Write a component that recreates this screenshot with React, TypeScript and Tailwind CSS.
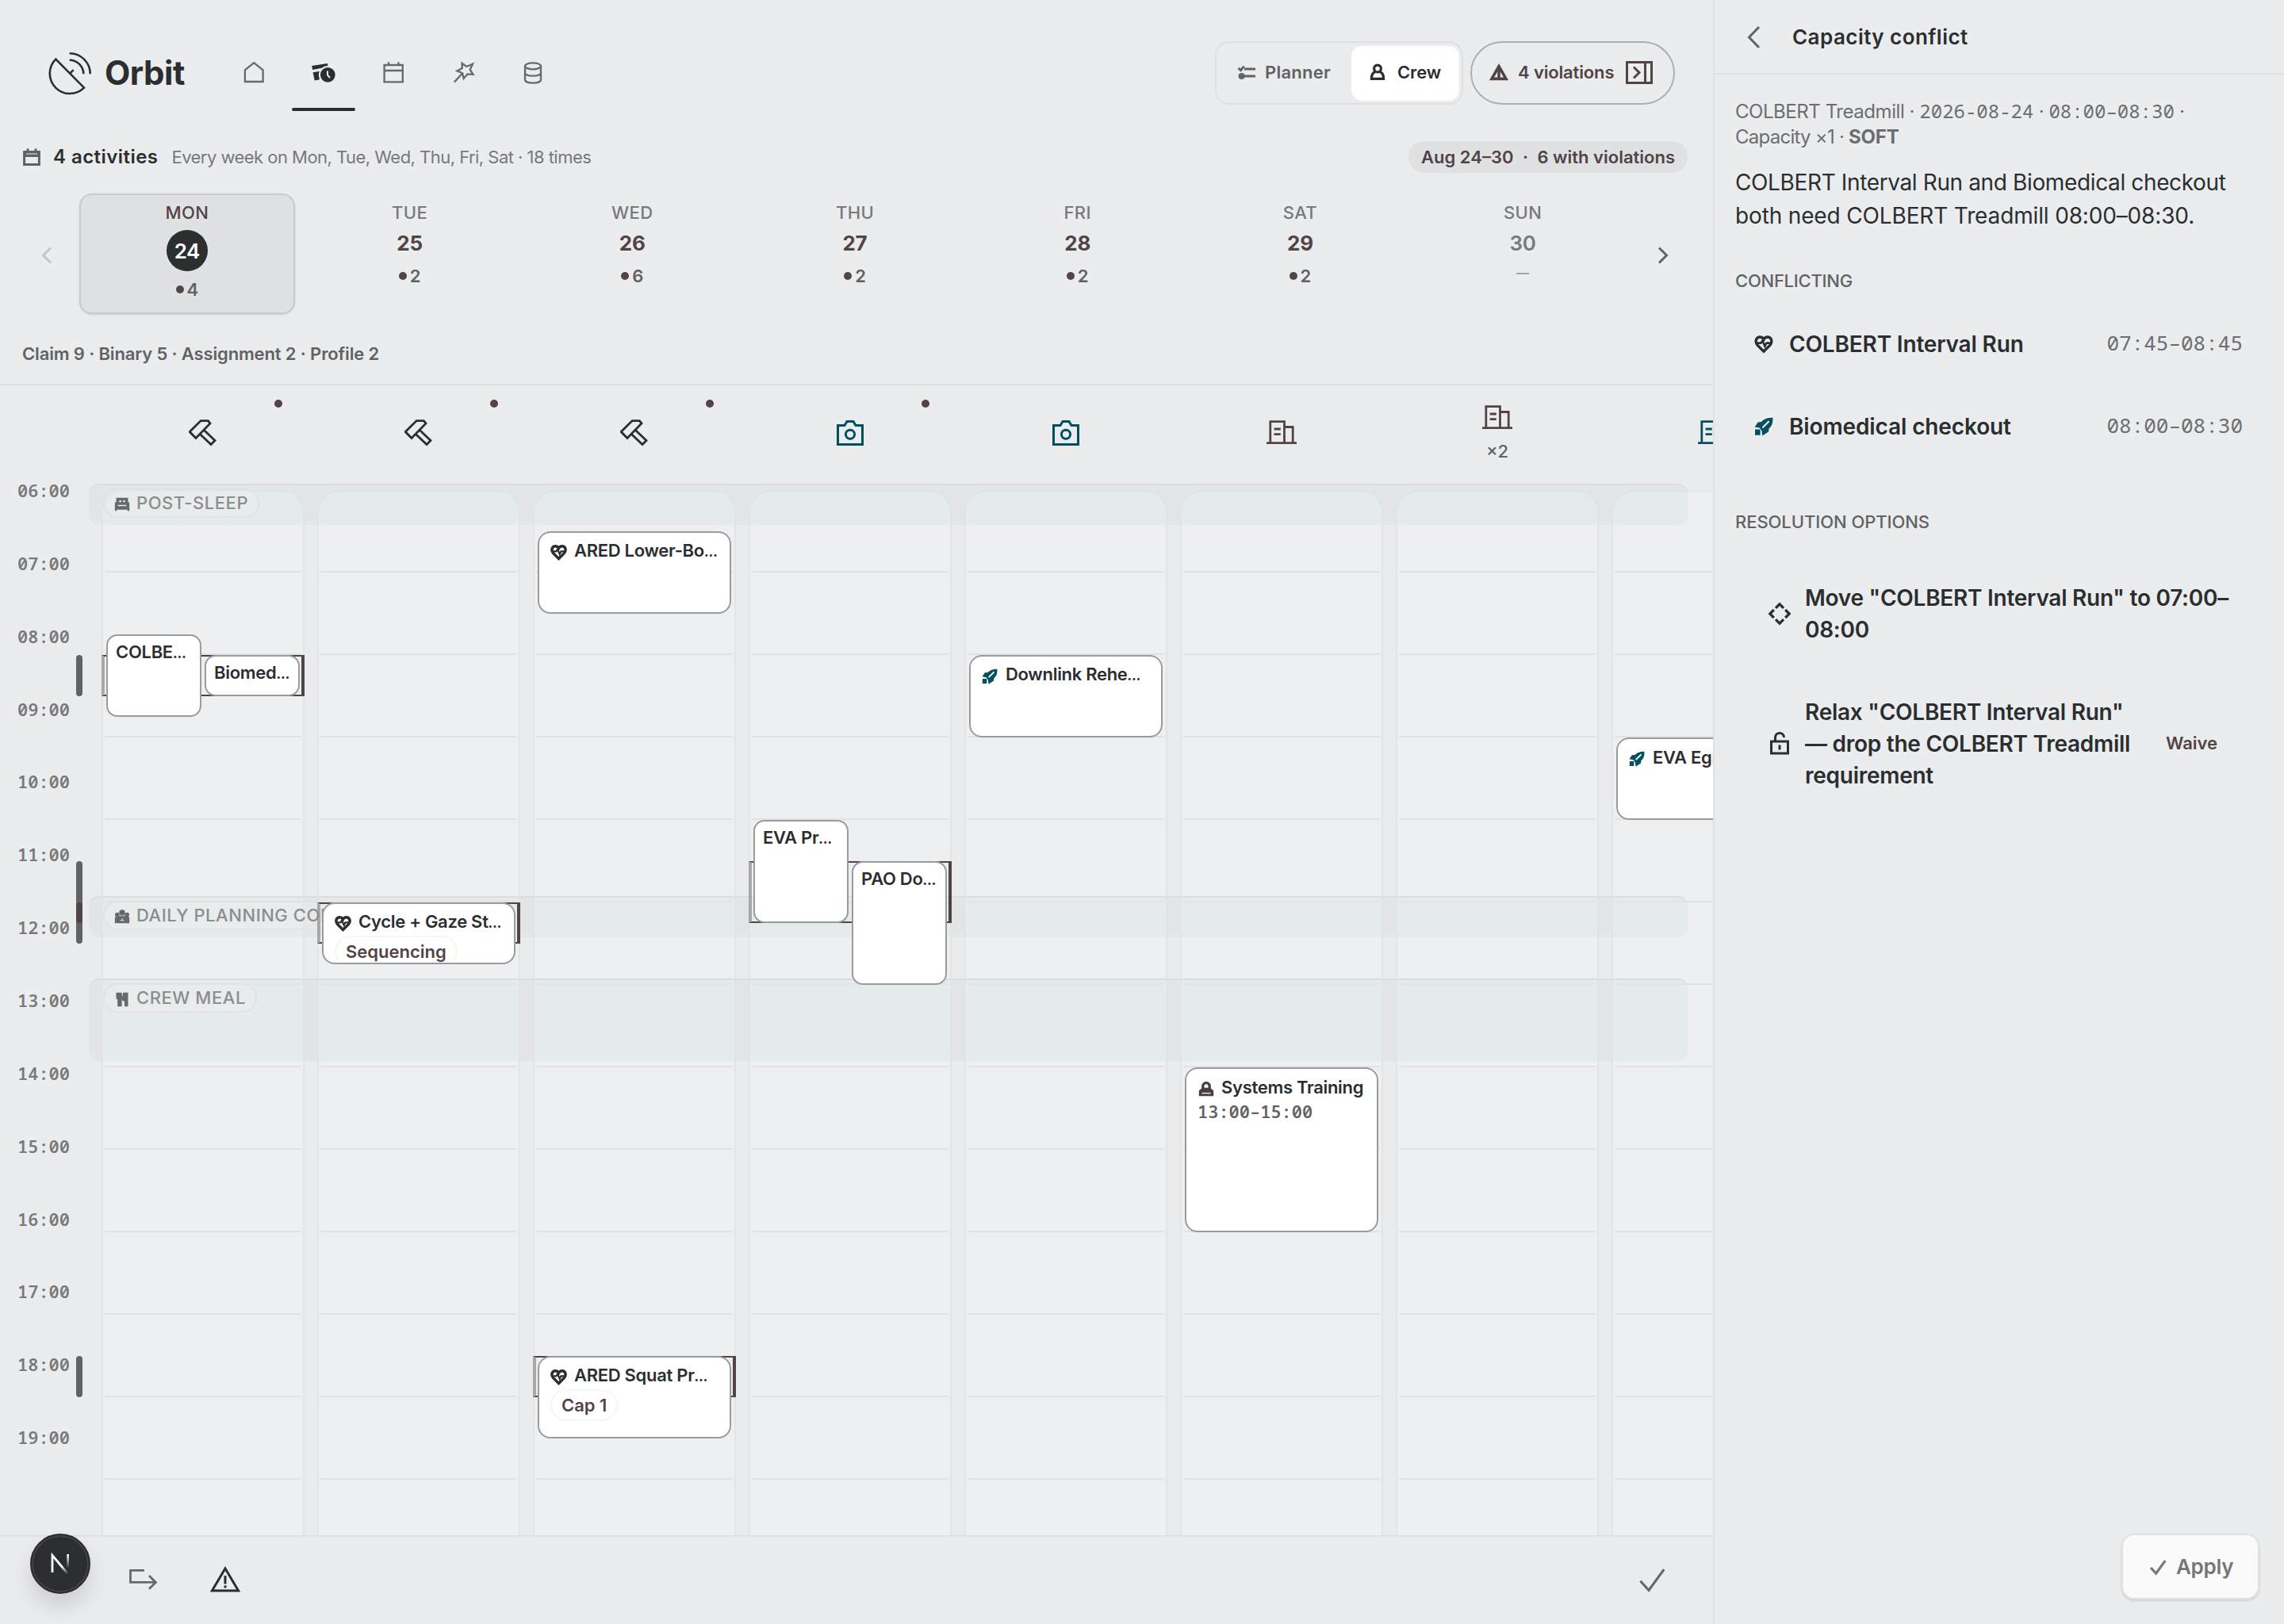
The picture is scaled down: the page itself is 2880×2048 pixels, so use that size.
import type { ReactNode } from "react";

type IconProps = { className?: string };

const Svg = ({ box, className, sw = 2, children }: { box: number; className?: string; sw?: number; children: ReactNode }) => (
  <svg viewBox={`0 0 ${box} ${box}`} className={className} fill="none" stroke="currentColor" strokeWidth={sw}>
    {children}
  </svg>
);

/* ---------- icons ---------- */

const Logo = () => (
  <Svg box={56} sw={2.6} className="size-14 text-[#2b2e30]">
    <path d="M9.3 10.7A25.2 25.2 0 1 0 45 46.7Z M27.3 28.7L31.6 24.2 M26.7 11.7A17.7 17.7 0 0 1 44.3 29.3 M26.7 3.2A26 26 0 0 1 52.8 29.3" />
  </Svg>
);
const HomeIcon = () => (
  <Svg box={32} sw={2.3} className="size-8"><path d="M4.9 28V13.4L16.2 4.2L27.6 13.4V28Z" /></Svg>
);
const ScheduleIcon = () => (
  <Svg box={32} className="size-8 text-[#2b2e30]">
    <path fill="currentColor" stroke="none" d="M1.3 8L20.8 5L21.8 9.2L2 13ZM2.6 16.2L13 14.4L10.5 25.4L4.8 26.4Z" />
    <circle cx="21.3" cy="19.3" r="10.4" fill="currentColor" stroke="#ebecee" strokeWidth="2" />
    <path d="M21 14.6V19.6L24 23" stroke="#ebecee" />
  </Svg>
);
const CalendarIcon = () => (
  <Svg box={32} sw={2.3} className="size-8"><path d="M4.6 7H27.8V28.4H4.6ZM4.6 14H27.8M10 3.2V7M22.4 3.2V7" /></Svg>
);
const WandIcon = () => (
  <Svg box={32} sw={2.3} className="size-8">
    <path d="M14.5 4.8L20.2 9L28 5.8L24.7 12.8L28.6 19L21.5 18.4L16.6 24L15.2 17.3L8.4 14.4L14.8 11ZM14.6 18L4.8 28.6" />
  </Svg>
);
const DatabaseIcon = () => (
  <Svg box={32} sw={2.3} className="size-8">
    <ellipse cx="16" cy="8.3" rx="10" ry="4" />
    <path d="M6 8.3V25.5C6 31 26 31 26 25.5V8.3M6 16.8C6 22 26 22 26 16.8" />
  </Svg>
);
const PlannerIcon = () => (
  <Svg box={24} sw={3} className="size-6">
    <path d="M1.6 6.8L4.6 9.6L8.6 4.6M9 8H23M9 17H23" />
    <circle cx="5.6" cy="17" r="4" fill="currentColor" stroke="none" />
  </Svg>
);
const CrewIcon = () => (
  <Svg box={24} sw={3.2} className="size-6 text-[#2b2e30]">
    <circle cx="12" cy="7.6" r="4.4" />
    <path d="M9 11.5C5 13 4.4 16 4.4 20.4H19.6C19.6 16 19 13 15 11.5" />
  </Svg>
);
const AlertSmallIcon = () => (
  <Svg box={24} sw={3.6} className="size-6"><path d="M12 4.6L21 20.4H3ZM12 8V19" /></Svg>
);
const PanelIcon = () => (
  <Svg box={36} sw={3} className="size-9"><path d="M2.5 5.5H33.5V31.5H2.5ZM25.5 5.5V31.5M11 11.5L18 18.5L11 25.5" /></Svg>
);
const CalendarSolidIcon = () => (
  <Svg box={24} sw={3} className="size-6">
    <path d="M2.6 5.4H21.4V21.4H2.6Z" />
    <path d="M2.6 5H21.4V12H2.6Z" fill="currentColor" stroke="none" />
    <path d="M7 1.4V5M17 1.4V5" />
    <path d="M5 8H19" stroke="#ebecee" strokeWidth="1" />
  </Svg>
);
const HammerIcon = () => (
  <Svg box={36} sw={2.8} className="size-9 text-[#2b2e30]">
    <path d="M1.2 16.6L15.2 2.6H24.4L27 6L9 24.4ZM18.8 14L33 27.6L28 32.6L14 19.2" />
  </Svg>
);
const CameraIcon = () => (
  <Svg box={36} sw={3} className="size-9 text-[#05505f]">
    <path d="M2.5 8.5H11L14 3.5H22L25 8.5H33.5V32.5H2.5Z" /><circle cx="18" cy="19.8" r="5.6" />
  </Svg>
);
const BuildingIcon = ({ className }: IconProps) => (
  <svg viewBox="-1 0 38 36" className={`h-9 w-[38px] shrink-0 ${className}`} fill="none" stroke="currentColor" strokeWidth="2.8">
    <path d="M3.8 30.5V3.6H21.5V30.5M21.5 10.5H32.2V30.5M-1 30.6H37M8.6 13H16.8M8.6 19.6H16.8" />
  </svg>
);
const HeartIcon = ({ className = "size-[21px]", sw = 4 }: IconProps & { sw?: number }) => (
  <Svg box={24} sw={sw} className={`shrink-0 text-[#2b2e30] ${className}`}>
    <path d="M12 21.2L4.4 13.6C0 8.6 2.8 3 7.2 3C9.6 3 11 4 12 6C13 4 14.4 3 16.8 3C21.2 3 24 8.6 19.6 13.6Z" />
    <path d="M3 10.6H8.4L10.4 7.6L13.4 14.6L15.4 10.6H21" strokeWidth="2.6" />
  </Svg>
);
const RocketIcon = ({ className = "size-5", hole = "#fff" }: IconProps & { hole?: string }) => (
  <Svg box={24} className={`shrink-0 text-[#05505f] ${className}`}>
    <path fill="currentColor" stroke="none" d="M23.4 .8C23.4 8 22.4 11 18.5 14.6L18 18.6L10.4 23.6L9.4 17L6.6 13.6L.6 12.4L4.7 6.4L9 6C13 2 17 .8 23.4 .8ZM1 15.6H7.6V22.8H1Z" />
    <path d="M11 12.8L18 5.8" stroke={hole} strokeWidth="2.2" strokeLinecap="round" />
  </Svg>
);
const TrainingIcon = () => (
  <Svg box={24} sw={3.6} className="size-[22px] shrink-0 text-[#4a3f41]">
    <path d="M7.4 14V8.4C7.4 2.6 16.6 2.6 16.6 8.4V14M8 12.5H16" />
    <path d="M2 14.5L5 12H19L22 14.5V22H2Z" fill="currentColor" stroke="none" /><path d="M6 18.2H18" stroke="#fff" strokeWidth="1.4" />
  </Svg>
);
const BedIcon = () => (
  <svg viewBox="0 0 24 24" className="size-5 shrink-0" fill="currentColor">
    <path d="M3 2H21V9H23V22H20V20H4V22H1V9H3ZM7.6 6V8.6H10.6V6ZM13.4 6V8.6H16.4V6ZM5.6 13V14.6H18.4V13Z" fillRule="evenodd" />
  </svg>
);
const GroupIcon = () => (
  <svg viewBox="0 0 24 24" className="size-5 shrink-0" fill="currentColor">
    <circle cx="12" cy="6" r="4.6" /><circle cx="4.6" cy="9" r="3.4" /><circle cx="19.4" cy="9" r="3.4" />
    <path d="M1 22V13.5C3 11 7 10.6 8 11H16C18 10.6 22 11.4 23 13.5V22Z" />
    <path d="M9 17.6H15M12 14.6V17" stroke="#e8ebec" strokeWidth="1.2" />
  </svg>
);
const MealIcon = () => (
  <svg viewBox="0 0 24 24" className="size-5 shrink-0" fill="currentColor">
    <path d="M3 2H11L13 9V2H21V23H15.5V15H13L11.5 12V23H5V13L3 11Z" />
  </svg>
);
const ChevronIcon = ({ className }: IconProps) => (
  <Svg box={32} sw={3} className={className}><path d="M20 6.5L10.5 16L20 25.5" /></Svg>
);
const MoveIcon = () => (
  <Svg box={32} sw={3.2} className="size-8"><path d="M11 8.8L16 3.8L21 8.8M11 23.2L16 28.2L21 23.2M8.8 11L3.8 16L8.8 21M23.2 11L28.2 16L23.2 21" /></Svg>
);
const UnlockIcon = () => (
  <Svg box={32} sw={3} className="size-8"><path d="M5.5 13H26.5V28H5.5ZM10.5 13V8C10.5 .5 21.5 .5 21.5 8M16 17.5V23.5" /></Svg>
);
const ForwardIcon = () => (
  <Svg box={40} sw={2.8} className="size-10"><path d="M22 8.4H4.5V23.4H36M28 15L36.4 23.4L28 31.8" /></Svg>
);
const AlertIcon = () => (
  <Svg box={40} sw={3} className="size-10 text-[#2b2e30]"><path d="M20 5.9L36.6 34H3.4ZM20 15V25.4M20 27.4V30.4" /></Svg>
);
const CheckIcon = ({ className, sw }: { className: string; sw: number }) => (
  <Svg box={32} sw={sw} className={className}><path d="M3 17.5L12.5 28L29.5 4.5" /></Svg>
);

/* ---------- header ---------- */

function Header() {
  const nav = [<HomeIcon />, <ScheduleIcon />, <CalendarIcon />, <WandIcon />, <DatabaseIcon />];
  return (
    <header className="flex h-[178px] shrink-0 pt-[52px] pr-12 pl-[61px]">
      <div className="flex h-[79px] items-center">
        <Logo />
        <span className="ml-[15px] text-[42px] leading-none font-bold tracking-[-0.5px]">Orbit</span>
      </div>
      <nav className="ml-[43px] flex h-20 text-[#66686a]">
        {nav.map((icon, i) => (
          <div key={i} className="relative flex h-[78px] w-[88px] items-center justify-center">
            {icon}
            {i === 1 && <span className="absolute -bottom-[10px] h-1 w-20 rounded-full bg-[#2b2e30]" />}
          </div>
        ))}
      </nav>
      <div className="ml-auto flex h-20 items-center gap-[9px] text-[22px] font-semibold">
        <div className="flex h-20 w-[313px] items-center rounded-[18px] border-2 border-[#dfe0e3] pb-0.5 pl-[26px] text-[#606264]">
          <PlannerIcon />
          <span className="ml-[11px] tracking-[0.25px]">Planner</span>
          <div className="mt-0.5 mr-[3px] ml-auto flex h-[69px] w-[136px] items-center rounded-[14px] bg-white pb-0.5 pl-[21px] text-[#2b2e30]">
            <CrewIcon />
            <span className="ml-[13px] tracking-[-0.1px]">Crew</span>
          </div>
        </div>
        <div className="flex h-20 w-[258px] items-center rounded-full border-2 border-[#aeafb2] pb-0.5 pl-[22px] text-[#524445]">
          <AlertSmallIcon />
          <span className="ml-[12px] tracking-[-0.15px]">4 violations</span>
          <span className="ml-[14px]"><PanelIcon /></span>
        </div>
      </div>
    </header>
  );
}

function Summary() {
  return (
    <div className="flex h-10 shrink-0 items-center pr-8 pl-[28px] text-[22px]">
      <span className="text-[#606264]"><CalendarSolidIcon /></span>
      <span className="ml-[15px] text-2xl font-semibold tracking-[0.45px]">4 activities</span>
      <span className="ml-[17px] tracking-[-0.53px] text-[#77797c]">Every week on Mon, Tue, Wed, Thu, Fri, Sat · 18 times</span>
      <span className="ml-auto flex h-10 items-center rounded-full bg-[#dfe1e3] px-4 font-semibold text-[#524445]">
        Aug 24–30<span className="w-[30px] text-center">·</span>6 with violations
      </span>
    </div>
  );
}

const days: [string, number, string][] = [
  ["MON", 24, "4"], ["TUE", 25, "2"], ["WED", 26, "6"], ["THU", 27, "2"], ["FRI", 28, "2"], ["SAT", 29, "2"], ["SUN", 30, ""],
];

function DayStrip() {
  return (
    <div className="mt-[26px] flex h-[152px] shrink-0 pr-6 pl-5">
      <div className="flex w-20 items-center justify-center pt-1 text-[#c3c5c7]"><ChevronIcon className="size-8" /></div>
      <div className="grid flex-1 grid-cols-7 gap-[9px]">
        {days.map(([name, date, count], i) => {
          const active = i === 0;
          return (
            <div
              key={name}
              className={`flex flex-col items-center rounded-2xl border-2 pt-[9px] text-[22px] ${active ? "border-[#c9cbcd] bg-[#dfe1e3] shadow-sm" : "border-transparent"}`}
            >
              <span className={`leading-[26px] font-medium tracking-[0.4px] ${active ? "text-[#524445]" : "text-[#77797c]"}`}>{name}</span>
              {active ? (
                <span className="mt-[9px] flex size-[52px] items-center justify-center rounded-full bg-[#2b2f30] text-[26px] font-semibold tracking-[-0.4px] text-white">{date}</span>
              ) : (
                <span className={`mt-[10px] text-[26px] leading-[32px] tracking-[-0.2px] ${count ? "font-bold text-[#524445]" : "font-semibold text-[#77797c]"}`}>{date}</span>
              )}
              {count ? (
                <span className={`flex items-center gap-[4px] leading-[26px] font-semibold text-[#606264] ${active ? "mt-[10px]" : "mt-[12px]"}`}>
                  <i className="size-[10px] rounded-full bg-[#524445]" />{count}
                </span>
              ) : (
                <span className="mt-[21px] h-0.5 w-4 bg-[#a3a5a7]" />
              )}
            </div>
          );
        })}
      </div>
      <div className="flex w-20 items-center justify-center pt-1 text-[#606264]"><ChevronIcon className="size-8 rotate-180" /></div>
    </div>
  );
}

/* ---------- board ---------- */

const heads: { icon: ReactNode; dot?: boolean; count?: string }[] = [
  { icon: <HammerIcon />, dot: true },
  { icon: <HammerIcon />, dot: true },
  { icon: <HammerIcon />, dot: true },
  { icon: <CameraIcon />, dot: true },
  { icon: <CameraIcon /> },
  { icon: <BuildingIcon className="text-[#524445]" /> },
  { icon: <BuildingIcon className="text-[#524445]" />, count: "×2" },
  { icon: <BuildingIcon className="text-[#05505f]" /> },
];

const times = ["06:00", "07:00", "08:00", "09:00", "10:00", "11:00", "12:00", "13:00", "14:00", "15:00", "16:00", "17:00", "18:00", "19:00"];
const mono = "font-['Noto_Sans_Mono','Liberation_Mono',monospace]";

/* Vertical offsets below are measured from the top of the board body. */
const bands = [
  { top: 4, height: 52, label: "POST-SLEEP", icon: <BedIcon />, tint: "mt-1.5 rounded-t-[28px]" },
  { top: 524, height: 52, label: "DAILY PLANNING CONFERENCE", icon: <GroupIcon />, tint: "" },
  { top: 628, height: 104, label: "CREW MEAL", icon: <MealIcon />, tint: "" },
];
const markers = [
  { top: 220, height: 52, color: "bg-[#606264]" },
  { top: 480, height: 104, color: "bg-[#606264]" },
  { top: 532, height: 26, color: "bg-[#524445]" },
  { top: 1104, height: 52, color: "bg-[#606264]" },
];
const brackets = [
  { col: 0, top: 220, height: 52 },
  { col: 1, top: 532, height: 52 },
  { col: 3, top: 480, height: 78 },
  { col: 2, top: 1104, height: 52 },
];
type Event = { left: number; top: number; width: number; height: number; title: string; cut?: boolean; icon?: ReactNode; time?: string; tag?: string };
const events: Event[] = [
  { left: 134, top: 194, width: 120, height: 104, title: "COLBE", cut: true },
  { left: 258, top: 220, width: 120, height: 52, title: "Biomed", cut: true },
  { left: 406, top: 532, width: 244, height: 78, title: "Cycle + Gaze St", cut: true, icon: <HeartIcon />, tag: "Sequencing" },
  { left: 678, top: 64, width: 244, height: 104, title: "ARED Lower-Bo", cut: true, icon: <HeartIcon /> },
  { left: 678, top: 1104, width: 244, height: 104, title: "ARED Squat Pr", cut: true, icon: <HeartIcon />, tag: "Cap 1" },
  { left: 950, top: 428, width: 120, height: 130, title: "EVA Pr", cut: true },
  { left: 1074, top: 480, width: 120, height: 156, title: "PAO Do", cut: true },
  { left: 1222, top: 220, width: 244, height: 104, title: "Downlink Rehe", cut: true, icon: <RocketIcon /> },
  { left: 1494, top: 740, width: 244, height: 208, title: "Systems Training", icon: <TrainingIcon />, time: "13:00–15:00" },
  { left: 2038, top: 324, width: 244, height: 104, title: "EVA Egress", icon: <RocketIcon /> },
];

function EventCard({ e }: { e: Event }) {
  return (
    <div
      className={`absolute overflow-hidden border-2 border-[#999c9f] bg-white text-[22px] ${e.icon ? "rounded-2xl pt-[9px] pl-[14px]" : "rounded-[14px] pt-[7px] pl-[10px]"}`}
      style={{ left: e.left, top: e.top, width: e.width, height: e.height }}
    >
      <div className="flex h-7 items-center whitespace-nowrap">
        {e.icon && <span className="mt-[3px] flex w-[30px]">{e.icon}</span>}
        <span className="leading-7 font-semibold tracking-[-0.3px]">
          {e.title}{e.cut && <span className="text-[15px] font-black">…</span>}
        </span>
      </div>
      {e.time && <div className={`mt-[1px] text-[22px] leading-[30px] font-semibold text-[#606264] ${mono}`}>{e.time}</div>}
      {e.tag && (
        <span className="mt-[3px] inline-flex h-10 items-center rounded-full border-2 border-[#f6f6f7] px-[12px] font-semibold text-[#524445]">{e.tag}</span>
      )}
    </div>
  );
}

function Board() {
  return (
    <section className="flex h-[1452px] shrink-0 flex-col overflow-hidden border-t-2 border-[#dfe0e2]">
      <div className="flex h-[120px] shrink-0 gap-4 pl-32">
        {heads.map((h, i) => (
          <div key={i} className="relative flex w-64 shrink-0 flex-col items-center justify-center">
            {h.icon}
            {h.count && <span className="mt-2.5 text-[22px] leading-[28px] font-medium text-[#606264]">{h.count}</span>}
            {h.dot && <i className="absolute top-[18px] left-[218px] size-[10px] rounded-full bg-[#524445]" />}
          </div>
        ))}
      </div>
      <div className="relative flex min-h-0 flex-1">
        <div className={`w-32 shrink-0 pt-px pl-[22px] text-[22px] font-semibold text-[#77797c] ${mono}`}>
          {times.map((t) => <div key={t} className="h-[91.86px] leading-[22px]">{t}</div>)}
        </div>
        <div className="flex gap-4 pt-3">
          {heads.map((_, i) => (
            <div key={i} className="w-64 shrink-0 rounded-t-[28px] border-2 border-b-0 border-[#e3e4e6] bg-[#eeeff1] px-0.5">
              <div className="h-[102px] border-b-2 border-[#e0e1e3]" />
              {times.slice(0, 11).map((t) => (
                <div key={t} className="h-[104px] border-b-2 border-[#e0e1e3]" />
              ))}
            </div>
          ))}
        </div>
        {bands.map((b) => (
          <div
            key={b.label}
            className="absolute left-[112px] w-[2016px] overflow-hidden rounded-xl border-t-2 border-[#dbddde] bg-[#1e2328]/3"
            style={{ top: b.top, height: b.height }}
          >
            <div className="absolute inset-0 flex gap-4 pl-4">
              {heads.map((_, i) => <i key={i} className={`w-64 shrink-0 bg-[#e2eeec]/45 ${b.tint}`} />)}
            </div>
            <div className="relative mt-[4px] ml-[18px] inline-flex h-[37px] items-center gap-2 rounded-full border-2 border-[#e0e2e4] bg-white/10 pr-[12px] pl-3 text-[#66686a]">
              <span className="mt-[3px]">{b.icon}</span>
              <span className="text-[22px] font-medium tracking-[0.55px] whitespace-nowrap text-[#8b8d8f]">{b.label}</span>
            </div>
          </div>
        ))}
        {markers.map((m) => (
          <i key={m.top} className={`absolute left-24 w-2 rounded-full ${m.color}`} style={{ top: m.top, height: m.height }} />
        ))}
        {brackets.map((b) => (
          <div
            key={b.col}
            className="absolute w-64 border-2 border-r-4 border-l-4 border-[#524445] border-l-[#8b8d8f]/70"
            style={{ left: 128 + b.col * 272, top: b.top, height: b.height }}
          />
        ))}
        {events.map((e) => <EventCard key={e.title} e={e} />)}
      </div>
    </section>
  );
}

/* ---------- conflict panel ---------- */

function ConflictPanel() {
  return (
    <aside className="flex w-[720px] shrink-0 flex-col border-l-2 border-[#dfe0e2]">
      <div className="flex h-[94px] shrink-0 items-center border-b-2 border-[#dfe0e2] pt-px pl-8 text-[#606264]">
        <Svg box={36} sw={3} className="size-9"><path d="M24 5L11.5 18L24 31" /></Svg>
        <h2 className="ml-[30px] text-[26px] font-semibold tracking-[0.45px] text-[#2b2e30]">Capacity conflict</h2>
      </div>
      <div className="pt-[30px] pl-[26px]">
        <div className="text-2xl leading-8 whitespace-nowrap text-[#6b6d70]">
          <div className="tracking-[-0.45px]">
            COLBERT Treadmill · <span className={`tracking-normal ${mono}`}>2026-08-24</span> · <span className={`tracking-normal ${mono}`}>08:00–08:30</span> ·
          </div>
          <div className="tracking-[-0.75px]">Capacity ×1 · <span className="font-bold tracking-[-0.2px]">SOFT</span></div>
        </div>
        <p className="mt-[20px] text-[28px] leading-[42px] tracking-[-0.37px] whitespace-nowrap">
          COLBERT Interval Run and Biomedical checkout<br />
          <span className="tracking-[-0.15px]">both need COLBERT Treadmill 08:00–08:30.</span>
        </p>
        <h3 className="mt-[46px] text-[22px] leading-[30px] font-medium tracking-[-0.25px] text-[#606264]">CONFLICTING</h3>
        <div className="mt-[13px] pr-[52px] pl-6">
          <div className="flex h-[104px] items-center">
            <HeartIcon className="size-6" sw={3.4} />
            <span className="ml-5 text-[28px] font-semibold tracking-[-0.17px]">COLBERT Interval Run</span>
            <span className={`-mt-[3px] ml-auto text-[26px] text-[#6b6d70] ${mono}`}>07:45–08:45</span>
          </div>
          <div className="flex h-[104px] items-center">
            <RocketIcon className="size-6" hole="#ebecee" />
            <span className="ml-5 text-[28px] font-semibold tracking-[-0.12px]">Biomedical checkout</span>
            <span className={`-mt-[3px] ml-auto text-[26px] text-[#6b6d70] ${mono}`}>08:00–08:30</span>
          </div>
        </div>
        <h3 className="mt-[53px] text-[22px] leading-[30px] font-medium tracking-[-0.06px] text-[#606264]">RESOLUTION OPTIONS</h3>
        <div className="mt-[29px] pl-10 text-[28px] leading-10 font-semibold tracking-[-0.26px] whitespace-nowrap">
          <div className="flex h-36 items-center">
            <MoveIcon />
            <div className="ml-4">Move "COLBERT Interval Run" to 07:00–<br />08:00</div>
          </div>
          <div className="flex h-[184px] items-center">
            <UnlockIcon />
            <div className="ml-4 w-[455px]">Relax "COLBERT Interval Run"<br />— drop the COLBERT Treadmill<br />requirement</div>
            <span className="-mt-[3px] text-[22px] tracking-normal text-[#524445]">Waive</span>
          </div>
        </div>
      </div>
      <button className="mt-auto mr-[31px] mb-[31px] flex h-[83px] w-[174px] items-center self-end rounded-2xl border-2 border-[#dfe1e3] bg-[#fafafb] pl-[33px] text-[26px] font-semibold text-[#74767a] shadow-[0_2px_3px_rgba(0,0,0,0.12)]">
        <CheckIcon sw={4.4} className="size-[22px]" />
        <span className="ml-[12px] tracking-[-0.3px]">Apply</span>
      </button>
    </aside>
  );
}

function Footer() {
  return (
    <footer className="flex h-28 shrink-0 items-center border-t-2 border-[#dfe0e2] pr-[56px] pb-[3px] pl-[38px] text-[#66686a]">
      <div className="-mt-10 flex size-[76px] items-center justify-center rounded-full border-2 border-[#2b2e30] bg-[#2a2e2f] text-white shadow-[0_16px_28px_rgba(0,0,0,0.13),inset_0_0_0_2px_#4b3f40]">
        <svg viewBox="0 0 26 28" className="h-7 w-[26px]" fill="none" strokeWidth="2.8">
          <defs>
            <linearGradient id="diag" x1="0" y1="0" x2="0.9" y2="1"><stop offset="0.6" stopColor="#fff" /><stop offset="1" stopColor="#fff" stopOpacity="0" /></linearGradient>
            <linearGradient id="stem" gradientUnits="userSpaceOnUse" x1="0" y1="2" x2="0" y2="20"><stop stopColor="#fff" /><stop offset="1" stopColor="#fff" stopOpacity="0" /></linearGradient>
          </defs>
          <path d="M3 25V3.4L23.5 28" stroke="url(#diag)" />
          <path d="M22.6 2V19" stroke="url(#stem)" />
        </svg>
      </div>
      <span className="ml-[46px]"><ForwardIcon /></span>
      <span className="ml-[64px]"><AlertIcon /></span>
      <span className="mr-[3px] ml-auto"><CheckIcon sw={2.8} className="size-9" /></span>
    </footer>
  );
}

export default function App() {
  return (
    <div className="flex h-[2048px] w-[2880px] overflow-hidden bg-[#ebecee] font-['Inter',sans-serif] text-[#2b2e30]">
      <main className="flex w-[2160px] shrink-0 flex-col overflow-hidden">
        <Header />
        <Summary />
        <DayStrip />
        <div className="flex h-[88px] shrink-0 items-center pt-3 pl-7 text-[22px] font-semibold tracking-[-0.14px] text-[#606264]">
          Claim 9 · Binary 5 · Assignment 2 · Profile 2
        </div>
        <Board />
        <Footer />
      </main>
      <ConflictPanel />
    </div>
  );
}
